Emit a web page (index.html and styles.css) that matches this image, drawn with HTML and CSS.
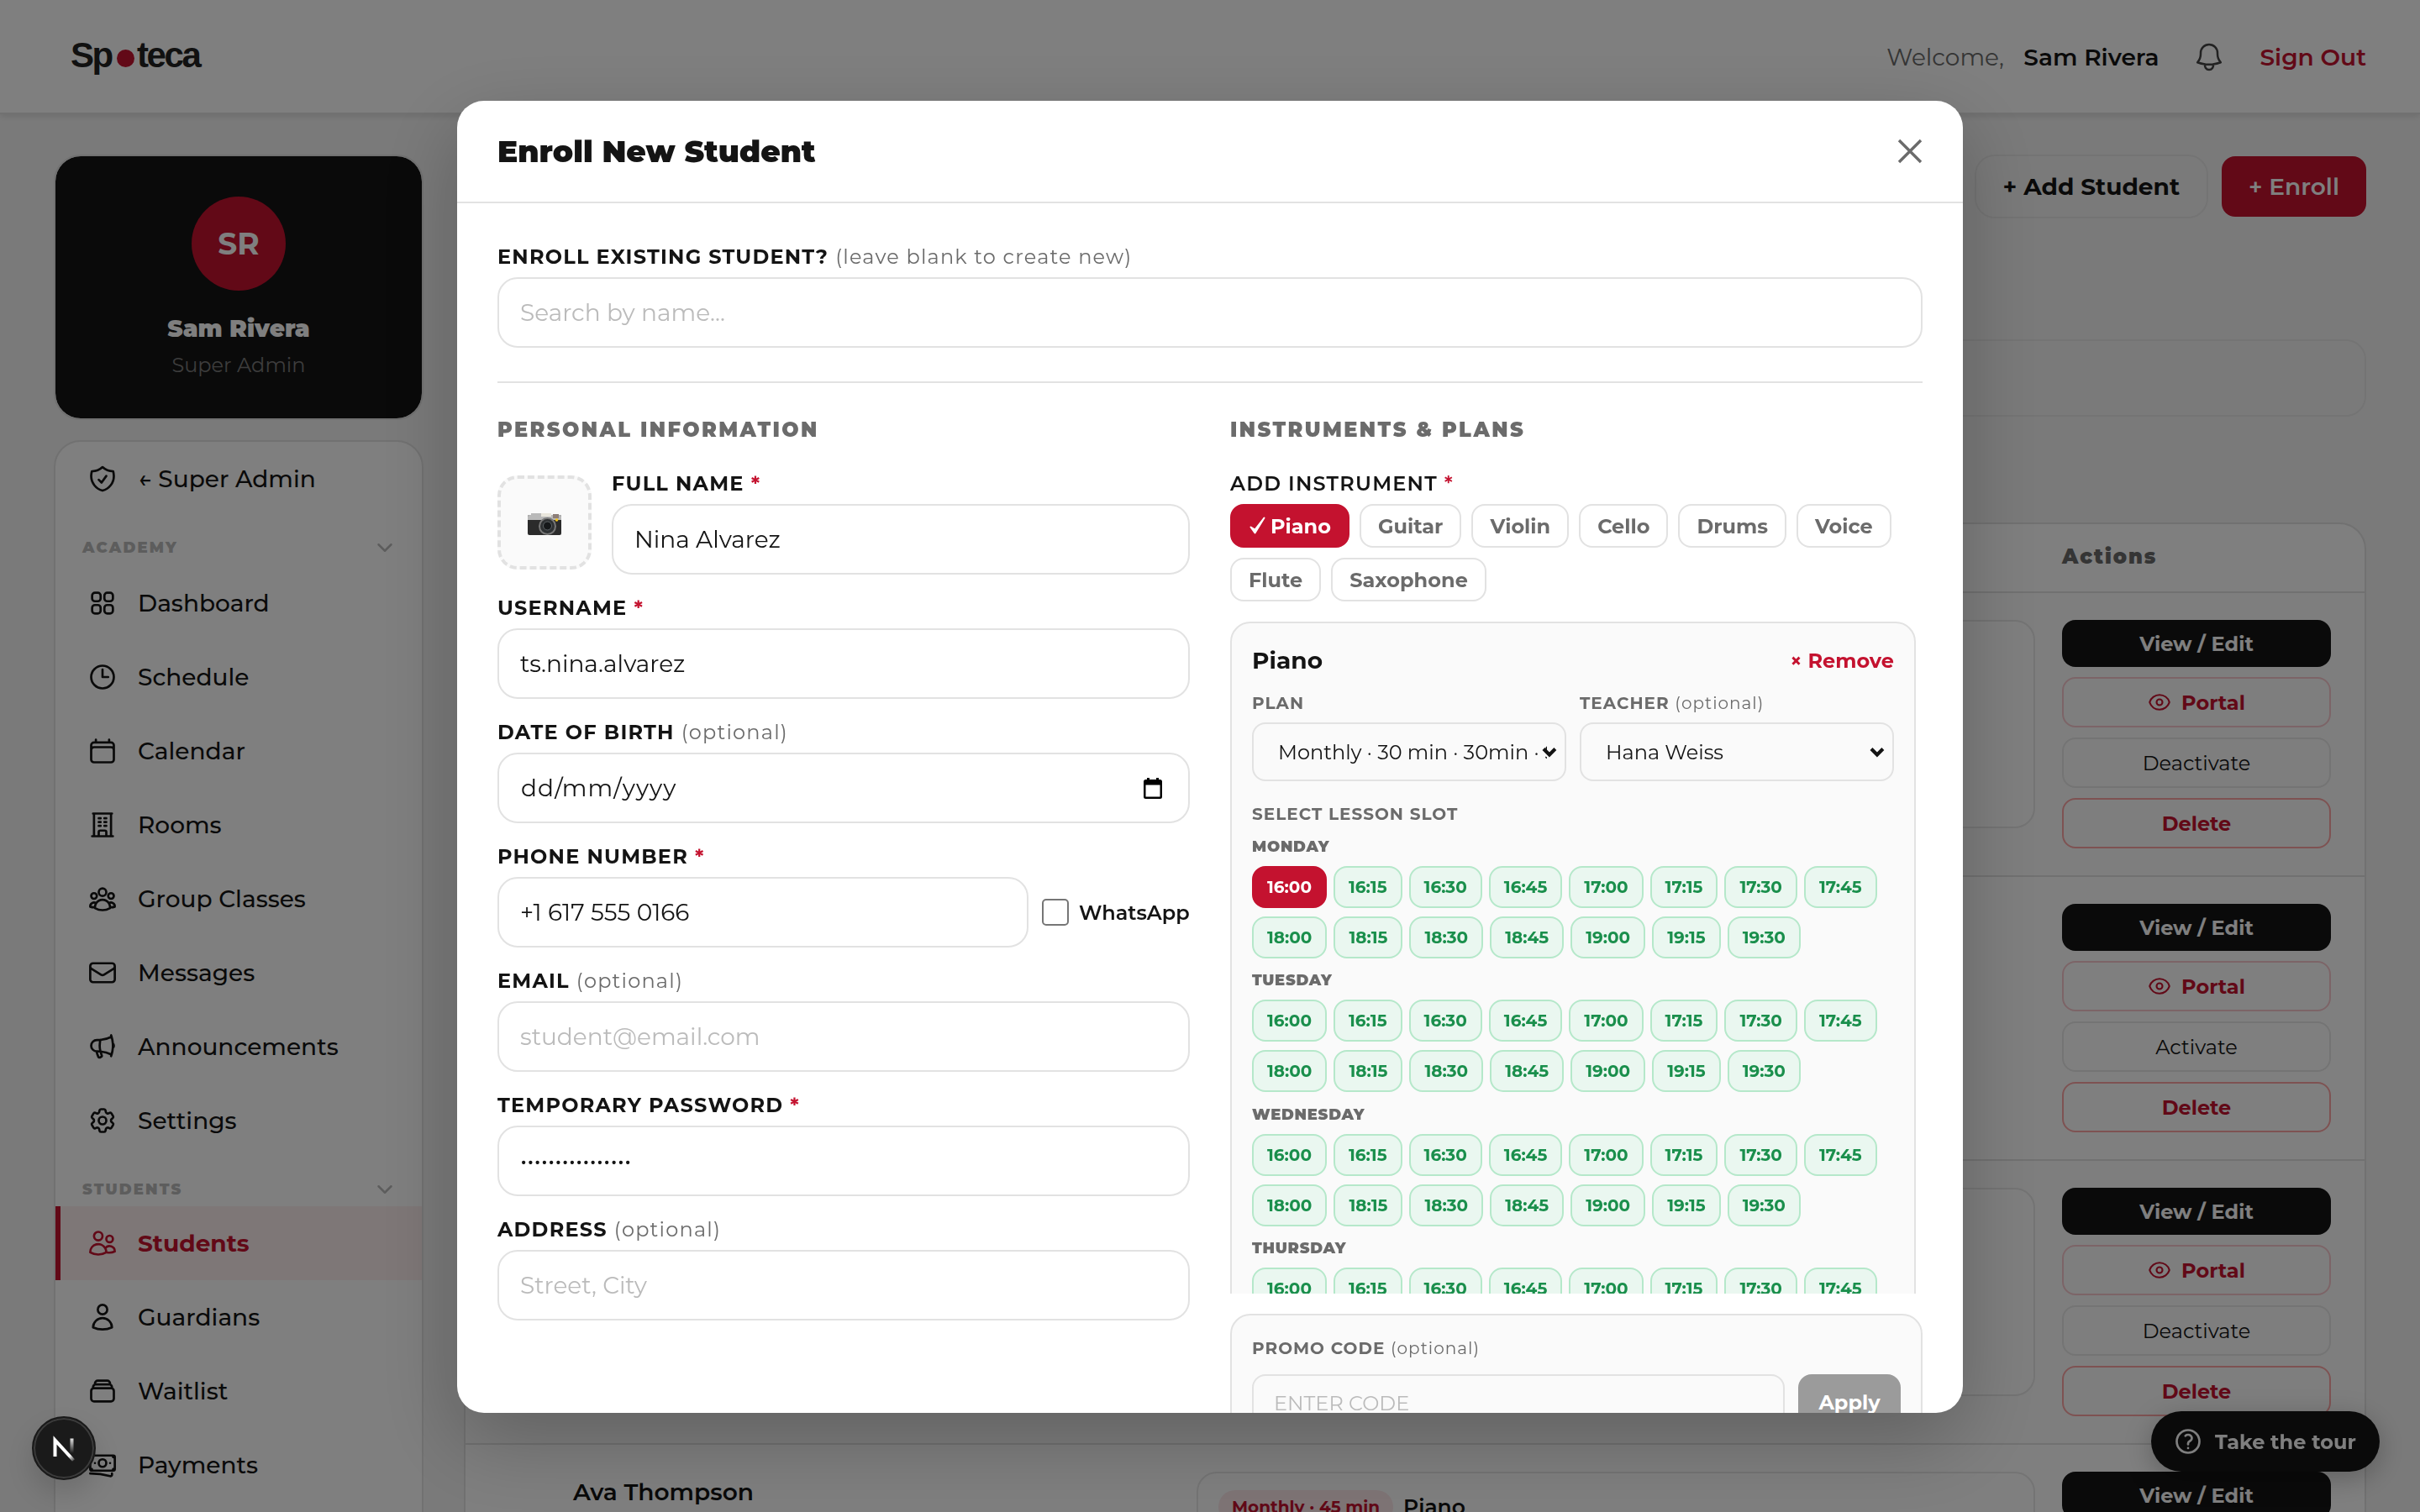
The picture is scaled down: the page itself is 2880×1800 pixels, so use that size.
FILE: index.html
```html
<!DOCTYPE html>
<html lang="en">

<head>
    <meta charset="utf-8">
    <meta name="viewport" content="width=device-width, initial-scale=1.0">
    <title>Spoteca - Students</title>
    <link rel="stylesheet" href="styles.css">
</head>

<body>
    <header class="topbar">
        <div class="logo">Sp<span class="logo-dot"></span>teca</div>
        <div class="topbar-right">
            <div class="welcome">Welcome, <b>Sam Rivera</b></div>
            <svg class="icon bell" viewBox="0 0 24 24"><path d="M14.857 17.082a23.848 23.848 0 0 0 5.454-1.31A8.967 8.967 0 0 1 18 9.75V9A6 6 0 0 0 6 9v.75a8.967 8.967 0 0 1-2.312 6.022c1.733.64 3.56 1.085 5.455 1.31m5.714 0a24.255 24.255 0 0 1-5.714 0m5.714 0a3 3 0 1 1-5.714 0"/></svg>
            <a class="sign-out">Sign Out</a>
        </div>
    </header>

    <div class="page">
        <aside class="sidebar">
            <div class="profile">
                <div class="avatar">SR</div>
                <div class="profile-name">Sam Rivera</div>
                <div class="profile-role">Super Admin</div>
            </div>
            <nav class="nav">
                <a class="nav-item"><svg class="icon" viewBox="0 0 24 24"><path d="M9 12.75 11.25 15 15 9.75m-3-7.036A11.959 11.959 0 0 1 3.598 6 11.99 11.99 0 0 0 3 9.749c0 5.592 3.824 10.29 9 11.623 5.176-1.332 9-6.03 9-11.622 0-1.31-.21-2.571-.598-3.751h-.152c-3.196 0-6.1-1.248-8.25-3.285Z"/></svg>← Super Admin</a>
                <div class="nav-section first">ACADEMY<svg class="icon" viewBox="0 0 24 24"><path d="m19.5 8.25-7.5 7.5-7.5-7.5"/></svg></div>
                <a class="nav-item"><svg class="icon" viewBox="0 0 24 24"><path d="M3.75 6A2.25 2.25 0 0 1 6 3.75h2.25A2.25 2.25 0 0 1 10.5 6v2.25a2.25 2.25 0 0 1-2.25 2.25H6a2.25 2.25 0 0 1-2.25-2.25V6ZM3.75 15.75A2.25 2.25 0 0 1 6 13.5h2.25a2.25 2.25 0 0 1 2.25 2.25V18a2.25 2.25 0 0 1-2.25 2.25H6A2.25 2.25 0 0 1 3.75 18v-2.25ZM13.5 6a2.25 2.25 0 0 1 2.25-2.25H18A2.25 2.25 0 0 1 20.25 6v2.25A2.25 2.25 0 0 1 18 10.5h-2.25a2.25 2.25 0 0 1-2.25-2.25V6ZM13.5 15.75a2.25 2.25 0 0 1 2.25-2.25H18a2.25 2.25 0 0 1 2.25 2.25V18A2.25 2.25 0 0 1 18 20.25h-2.25A2.25 2.25 0 0 1 13.5 18v-2.25Z"/></svg>Dashboard</a>
                <a class="nav-item"><svg class="icon" viewBox="0 0 24 24"><path d="M12 6v6h4.5m4.5 0a9 9 0 1 1-18 0 9 9 0 0 1 18 0Z"/></svg>Schedule</a>
                <a class="nav-item"><svg class="icon" viewBox="0 0 24 24"><path d="M6.75 3v2.25M17.25 3v2.25M3 18.75V7.5a2.25 2.25 0 0 1 2.25-2.25h13.5A2.25 2.25 0 0 1 21 7.5v11.25m-18 0A2.25 2.25 0 0 0 5.25 21h13.5A2.25 2.25 0 0 0 21 18.75m-18 0v-7.5A2.25 2.25 0 0 1 5.25 9h13.5A2.25 2.25 0 0 1 21 11.25v7.5"/></svg>Calendar</a>
                <a class="nav-item"><svg class="icon" viewBox="0 0 24 24"><path d="M3.75 21h16.5M4.5 3h15M5.25 3v18m13.5-18v18M9 6.75h1.5m-1.5 3h1.5m-1.5 3h1.5m3-6H15m-1.5 3H15m-1.5 3H15M9 21v-3.375c0-.621.504-1.125 1.125-1.125h3.75c.621 0 1.125.504 1.125 1.125V21"/></svg>Rooms</a>
                <a class="nav-item"><svg class="icon" viewBox="0 0 24 24"><path d="M18 18.72a9.094 9.094 0 0 0 3.741-.479 3 3 0 0 0-4.682-2.72m.94 3.198.001.031c0 .225-.012.447-.037.666A11.944 11.944 0 0 1 12 21c-2.17 0-4.207-.576-5.963-1.584A6.062 6.062 0 0 1 6 18.719m12 0a5.971 5.971 0 0 0-.941-3.197m0 0A5.995 5.995 0 0 0 12 12.75a5.995 5.995 0 0 0-5.058 2.772m0 0a3 3 0 0 0-4.681 2.72 8.986 8.986 0 0 0 3.74.477m.94-3.197a5.971 5.971 0 0 0-.94 3.197M15 6.75a3 3 0 1 1-6 0 3 3 0 0 1 6 0Zm6 3a2.25 2.25 0 1 1-4.5 0 2.25 2.25 0 0 1 4.5 0Zm-13.5 0a2.25 2.25 0 1 1-4.5 0 2.25 2.25 0 0 1 4.5 0Z"/></svg>Group Classes</a>
                <a class="nav-item"><svg class="icon" viewBox="0 0 24 24"><path d="M21.75 6.75v10.5a2.25 2.25 0 0 1-2.25 2.25h-15a2.25 2.25 0 0 1-2.25-2.25V6.75m19.5 0A2.25 2.25 0 0 0 19.5 4.5h-15a2.25 2.25 0 0 0-2.25 2.25m19.5 0v.243a2.25 2.25 0 0 1-1.07 1.916l-7.5 4.615a2.25 2.25 0 0 1-2.36 0L3.32 8.91a2.25 2.25 0 0 1-1.07-1.916V6.75"/></svg>Messages</a>
                <a class="nav-item"><svg class="icon" viewBox="0 0 24 24"><path d="M10.34 15.84c-.688-.06-1.386-.09-2.09-.09H7.5a4.5 4.5 0 1 1 0-9h.75c.704 0 1.402-.03 2.09-.09m0 9.18c.253.962.584 1.892.985 2.783.247.55.06 1.21-.463 1.511l-.657.38c-.551.318-1.26.117-1.527-.461a20.845 20.845 0 0 1-1.44-4.282m3.102.069a18.03 18.03 0 0 1-.59-4.59c0-1.586.205-3.124.59-4.59m0 9.18a23.848 23.848 0 0 1 8.835 2.535M10.34 6.66a23.847 23.847 0 0 0 8.835-2.535m0 0A23.74 23.74 0 0 0 18.795 3m.38 1.125a23.91 23.91 0 0 1 1.014 5.395m-1.014 8.855c-.118.38-.245.754-.38 1.125m.38-1.125a23.91 23.91 0 0 0 1.014-5.395m0-3.46c.495.413.811 1.035.811 1.73 0 .695-.316 1.317-.811 1.73m0-3.46a24.347 24.347 0 0 1 0 3.46"/></svg>Announcements</a>
                <a class="nav-item"><svg class="icon" viewBox="0 0 24 24"><path d="M9.594 3.94c.09-.542.56-.94 1.11-.94h2.593c.55 0 1.02.398 1.11.94l.213 1.281c.063.374.313.686.645.87.074.04.147.083.22.127.325.196.72.257 1.075.124l1.217-.456a1.125 1.125 0 0 1 1.37.49l1.296 2.247a1.125 1.125 0 0 1-.26 1.431l-1.003.827c-.293.241-.438.613-.43.992a7.723 7.723 0 0 1 0 .255c-.008.378.137.75.43.991l1.004.827c.424.35.534.955.26 1.43l-1.298 2.247a1.125 1.125 0 0 1-1.369.491l-1.217-.456c-.355-.133-.75-.072-1.076.124a6.47 6.47 0 0 1-.22.128c-.331.183-.581.495-.644.869l-.213 1.281c-.09.543-.56.94-1.11.94h-2.594c-.55 0-1.019-.398-1.11-.94l-.213-1.281c-.062-.374-.312-.686-.644-.87a6.52 6.52 0 0 1-.22-.127c-.325-.196-.72-.257-1.076-.124l-1.217.456a1.125 1.125 0 0 1-1.369-.49l-1.297-2.247a1.125 1.125 0 0 1 .26-1.431l1.004-.827c.292-.24.437-.613.43-.991a6.932 6.932 0 0 1 0-.255c.007-.38-.138-.751-.43-.992l-1.004-.827a1.125 1.125 0 0 1-.26-1.43l1.297-2.247a1.125 1.125 0 0 1 1.37-.491l1.216.456c.356.133.751.072 1.076-.124.072-.044.146-.086.22-.128.332-.183.582-.495.644-.869l.214-1.28Z"/><path d="M15 12a3 3 0 1 1-6 0 3 3 0 0 1 6 0Z"/></svg>Settings</a>
                <div class="nav-section">STUDENTS<svg class="icon" viewBox="0 0 24 24"><path d="m19.5 8.25-7.5 7.5-7.5-7.5"/></svg></div>
                <a class="nav-item active"><svg class="icon" viewBox="0 0 24 24"><path d="M15 19.128a9.38 9.38 0 0 0 2.625.372 9.337 9.337 0 0 0 4.121-.952 4.125 4.125 0 0 0-7.533-2.493M15 19.128v-.003c0-1.113-.285-2.16-.786-3.07M15 19.128v.106A12.318 12.318 0 0 1 8.624 21c-2.331 0-4.512-.645-6.374-1.766l-.001-.109a6.375 6.375 0 0 1 11.964-3.07M12 6.375a3.375 3.375 0 1 1-6.75 0 3.375 3.375 0 0 1 6.75 0Zm8.25 2.25a2.625 2.625 0 1 1-5.25 0 2.625 2.625 0 0 1 5.25 0Z"/></svg>Students</a>
                <a class="nav-item"><svg class="icon" viewBox="0 0 24 24"><path d="M15.75 6a3.75 3.75 0 1 1-7.5 0 3.75 3.75 0 0 1 7.5 0ZM4.501 20.118a7.5 7.5 0 0 1 14.998 0A17.933 17.933 0 0 1 12 21.75c-2.676 0-5.216-.584-7.499-1.632Z"/></svg>Guardians</a>
                <a class="nav-item"><svg class="icon" viewBox="0 0 24 24"><path d="M6 6.878V6a2.25 2.25 0 0 1 2.25-2.25h7.5A2.25 2.25 0 0 1 18 6v.878m-12 0c.235-.083.487-.128.75-.128h10.5c.263 0 .515.045.75.128m-12 0A2.25 2.25 0 0 0 4.5 9v.878m13.5-3A2.25 2.25 0 0 1 19.5 9v.878m0 0a2.246 2.246 0 0 0-.75-.128H5.25c-.263 0-.515.045-.75.128m15 0A2.25 2.25 0 0 1 21 12v6a2.25 2.25 0 0 1-2.25 2.25H5.25A2.25 2.25 0 0 1 3 18v-6c0-.98.626-1.813 1.5-2.122"/></svg>Waitlist</a>
                <a class="nav-item"><svg class="icon" viewBox="0 0 24 24"><path d="M2.25 18.75a60.07 60.07 0 0 1 15.797 2.101c.727.198 1.453-.342 1.453-1.096V18.75M3.75 4.5v.75A.75.75 0 0 1 3 6h-.75m0 0v-.375c0-.621.504-1.125 1.125-1.125H20.25M2.25 6v9m18-10.5v.75c0 .414.336.75.75.75h.75m-1.5-1.5h.375c.621 0 1.125.504 1.125 1.125v9.75c0 .621-.504 1.125-1.125 1.125h-.375m1.5-1.5H21a.75.75 0 0 0-.75.75v.75m0 0H3.75m0 0h-.375a1.125 1.125 0 0 1-1.125-1.125V15m1.5 1.5v-.75A.75.75 0 0 0 3 15h-.75M15 10.5a3 3 0 1 1-6 0 3 3 0 0 1 6 0Zm3 0h.008v.008H18V10.5Zm-12 0h.008v.008H6V10.5Z"/></svg>Payments</a>
            </nav>
        </aside>

        <main class="content">
            <div class="page-actions">
                <a class="btn-outline">+ Add Student</a>
                <a class="btn-red">+ Enroll</a>
            </div>
            <div class="search-bar"></div>
            <div class="table" id="students">
                <div class="table-head">Actions</div>
            </div>
        </main>
    </div>

    <a class="tour"><svg class="icon" viewBox="0 0 24 24"><path d="M9.879 7.519c1.171-1.025 3.071-1.025 4.242 0 1.172 1.025 1.172 2.687 0 3.712-.203.179-.43.326-.67.442-.745.361-1.45.999-1.45 1.827v.75M21 12a9 9 0 1 1-18 0 9 9 0 0 1 18 0Zm-9 5.25h.008v.008H12v-.008Z"/></svg>Take the tour</a>

    <div class="overlay">
        <div class="modal">
            <div class="modal-head">
                <h2>Enroll New Student</h2>
                <svg class="close" viewBox="0 0 30 30"><path d="M2 2l26 26M28 2L2 28"/></svg>
            </div>
            <div class="modal-body">
                <div class="existing">
                    <label class="label">ENROLL EXISTING STUDENT? <span>(leave blank to create new)</span></label>
                    <input class="input" placeholder="Search by name...">
                </div>
                <div class="columns">
                    <div class="column">
                        <h3>PERSONAL INFORMATION</h3>
                        <div class="name-row">
                            <div class="photo">
                                <svg viewBox="0 0 42 28">
                                    <rect x="1" y="3" width="40" height="24" rx="2" fill="#2b2b2b"/>
                                    <path d="M1 9V5q0-2 2-2h2V1h12v2h22q2 0 2 2v4z" fill="#b9b9b9"/>
                                    <rect x="17" y="1" width="12" height="4" fill="#e9e6dc"/>
                                    <rect x="31" y="2" width="7" height="5" fill="#8d7f78"/>
                                    <circle cx="24.500" cy="16.500" r="10.500" fill="#777"/>
                                    <circle cx="24.500" cy="16.500" r="8.500" fill="#2e3133"/>
                                    <circle cx="24.500" cy="16" r="5" fill="#15181a" stroke="#5b6164"/>
                                    <circle cx="35.500" cy="9" r="1.800" fill="#f5c518"/>
                                </svg>
                            </div>
                            <div class="field">
                                <label class="label">FULL NAME <i>*</i></label>
                                <input class="input" value="Nina Alvarez">
                            </div>
                        </div>
                        <div class="field">
                            <label class="label">USERNAME <i>*</i></label>
                            <input class="input" value="ts.nina.alvarez">
                        </div>
                        <div class="field">
                            <label class="label">DATE OF BIRTH <span>(optional)</span></label>
                            <div class="input date">dd/mm/yyyy
                                <svg viewBox="0 0 22 25"><path d="M4 0h3v2h8V0h3v2h1.500q2.500 0 2.500 2.500v18q0 2.500-2.500 2.500h-17Q0 25 0 22.500v-18Q0 2 2.500 2H4zM2.500 8.500v14h17v-14z"/></svg>
                            </div>
                        </div>
                        <div class="field">
                            <label class="label">PHONE NUMBER <i>*</i></label>
                            <div class="phone-row">
                                <input class="input" value="+1 617 555 0166">
                                <span class="checkbox"></span>
                                <span class="whatsapp">WhatsApp</span>
                            </div>
                        </div>
                        <div class="field">
                            <label class="label">EMAIL <span>(optional)</span></label>
                            <input class="input" placeholder="student@email.com">
                        </div>
                        <div class="field">
                            <label class="label">TEMPORARY PASSWORD <i>*</i></label>
                            <input class="input" type="password" value="temporary-pass-1">
                        </div>
                        <div class="field">
                            <label class="label">ADDRESS <span>(optional)</span></label>
                            <input class="input" placeholder="Street, City">
                        </div>
                    </div>

                    <div class="column">
                        <h3>INSTRUMENTS &amp; PLANS</h3>
                        <label class="label medium">ADD INSTRUMENT <i>*</i></label>
                        <div class="chips">
                            <a class="chip selected"><svg viewBox="0 0 22 24"><path d="M2.500 13.500l5 7L18.500 2.500l-11 14z"/></svg>Piano</a>
                            <a class="chip">Guitar</a>
                            <a class="chip">Violin</a>
                            <a class="chip">Cello</a>
                            <a class="chip">Drums</a>
                            <a class="chip">Voice</a>
                            <a class="chip">Flute</a>
                            <a class="chip">Saxophone</a>
                        </div>
                        <div class="plans">
                            <div class="plan">
                                <div class="plan-head">
                                    <span>Piano</span>
                                    <a class="remove">× Remove</a>
                                </div>
                                <div class="plan-selects">
                                    <div>
                                        <label class="small-label">PLAN</label>
                                        <div class="select"><span>Monthly · 30 min · 30min · $120</span><svg viewBox="0 0 20 14"><path d="M3 3.500l7 7 7-7"/></svg></div>
                                    </div>
                                    <div>
                                        <label class="small-label">TEACHER <span>(optional)</span></label>
                                        <div class="select"><span>Hana Weiss</span><svg viewBox="0 0 20 14"><path d="M3 3.500l7 7 7-7"/></svg></div>
                                    </div>
                                </div>
                                <label class="small-label slot-label">SELECT LESSON SLOT</label>
                                <div id="days"></div>
                            </div>
                        </div>
                        <div class="promo">
                            <label class="small-label">PROMO CODE <span>(optional)</span></label>
                            <div class="promo-row">
                                <input class="promo-input" placeholder="ENTER CODE">
                                <a class="apply">Apply</a>
                            </div>
                        </div>
                    </div>
                </div>
            </div>
        </div>
    </div>

    <div class="dev-badge">
        <svg viewBox="0 0 40 40">
            <defs>
                <linearGradient id="fade-a" x1="20" y1="20" x2="33" y2="36" gradientUnits="userSpaceOnUse"><stop offset=".55" stop-color="#fff"/><stop offset="1" stop-color="#fff" stop-opacity="0"/></linearGradient>
                <linearGradient id="fade-b" x1="0" y1="6" x2="0" y2="26" gradientUnits="userSpaceOnUse"><stop stop-color="#fff"/><stop offset="1" stop-color="#fff" stop-opacity="0"/></linearGradient>
            </defs>
            <path d="M9.500 30V10.500L31.500 34.500" stroke="url(#fade-a)"/>
            <path d="M29.500 8.500v20" stroke="url(#fade-b)"/>
        </svg>
    </div>
    <script src="students.js"></script>
</body>

</html>
```

FILE: styles.css
```css
* {
    box-sizing: border-box;
}

html,
body {
    height: 100%;
    overflow: hidden;
}

body {
    margin: 0;
    background: #f5f5f5;
    color: #141414;
    font-family: Montserrat, Inter, sans-serif;
    font-size: 28px;
}

h2,
h3 {
    margin: 0;
}

.icon {
    width: 36px;
    height: 36px;
    flex: none;
    fill: none;
    stroke: currentColor;
    stroke-width: 1.8;
    stroke-linecap: round;
    stroke-linejoin: round;
}

/* top bar */

.topbar {
    position: relative;
    display: flex;
    align-items: center;
    justify-content: space-between;
    height: 136px;
    padding: 12px 64px 0 84px;
    background: #fff;
    border-bottom: 2px solid #e2e2e2;
    box-shadow: 0 2px 8px rgba(0, 0, 0, 0.12);
}

.logo {
    display: flex;
    align-items: baseline;
    margin-top: -14px;
    font: bold 42px "Liberation Sans", sans-serif;
    letter-spacing: -2.4px;
    color: #222;
}

.logo-dot {
    width: 21px;
    height: 21px;
    margin: 0 3px 0 6px;
    border-radius: 50%;
    background: #c4122f;
}

.topbar-right {
    display: flex;
    align-items: center;
    gap: 40px;
    margin-top: -10px;
}

.welcome {
    color: #6b6b6b;
}

.welcome b {
    margin-left: 16px;
    font-weight: 600;
    color: #141414;
}

.bell {
    width: 40px;
    height: 40px;
    stroke-width: 1.5;
    color: #444;
}

.sign-out {
    font-weight: 600;
    color: #c4122f;
}

/* layout */

.page {
    display: flex;
    gap: 48px;
    padding: 48px 64px 0;
}

.sidebar {
    flex: none;
    width: 440px;
}

.profile {
    display: flex;
    flex-direction: column;
    align-items: center;
    height: 316px;
    padding-top: 48px;
    border: 2px solid #e2e2e2;
    border-radius: 32px;
    background: #141414 padding-box;
    color: #fff;
}

.avatar {
    display: flex;
    align-items: center;
    justify-content: center;
    width: 112px;
    height: 112px;
    border-radius: 50%;
    background: #c4122f;
    font-size: 36px;
    font-weight: 700;
}

.profile-name {
    margin-top: 28px;
    font-weight: 900;
    line-height: 34px;
}

.profile-role {
    margin-top: 10px;
    font-size: 24px;
    line-height: 34px;
    color: #7a7a7a;
}

.nav {
    height: 1500px;
    margin-top: 24px;
    border: 2px solid #e2e2e2;
    border-radius: 32px;
    background: #fff;
}

.nav-item {
    display: flex;
    align-items: center;
    gap: 24px;
    height: 88px;
    padding-left: 32px;
    border-left: 6px solid transparent;
    font-weight: 500;
}

.nav-item.active {
    border-left-color: #c4122f;
    background: #fdeeef;
    color: #c4122f;
    font-weight: 700;
}

.nav-section {
    display: flex;
    align-items: center;
    justify-content: space-between;
    height: 58px;
    padding: 17px 32px 0;
    font-size: 18px;
    font-weight: 900;
    letter-spacing: 2.16px;
    color: #bbb;
}

.nav-section.first {
    height: 60px;
    padding-top: 15px;
}

.nav-section .icon {
    width: 24px;
    height: 24px;
    stroke-width: 2.5;
}

.content {
    flex: 1;
}

.page-actions {
    display: flex;
    align-items: center;
    justify-content: flex-end;
    gap: 16px;
    height: 76px;
}

.btn-outline,
.btn-red {
    display: flex;
    align-items: center;
    height: 76px;
    padding: 0 32px;
    border: 2px solid #e8e8e8;
    border-radius: 24px;
    font-weight: 700;
}

.btn-red {
    height: 72px;
    border: none;
    border-radius: 16px;
    background: #c4122f;
    color: #fff;
    font-weight: 600;
}

.search-bar {
    height: 92px;
    margin-top: 144px;
    border: 2px solid #e8e8e8;
    border-radius: 24px;
}

.table {
    margin-top: 126px;
    border: 2px solid #e2e2e2;
    border-radius: 32px;
    background: #fff;
    overflow: hidden;
}

.table-head {
    height: 82px;
    padding: 24px 0 0 1900px;
    border-bottom: 2px solid #e2e2e2;
    font-size: 24px;
    font-weight: 900;
    letter-spacing: 1.92px;
    color: #6b6b6b;
}

.row {
    display: grid;
    grid-template-columns: 710px 998px 320px;
    gap: 32px;
    height: 338px;
    padding: 32px 40px 32px 128px;
    border-bottom: 2px solid #e2e2e2;
    background: #fcfcfc;
}

.row:nth-child(odd) {
    background: #fff;
}

.row-name {
    padding-top: 7px;
    font-weight: 600;
}

.row-plan {
    display: flex;
    align-items: flex-start;
    gap: 12px;
    height: 248px;
    padding: 20px 24px;
    border: 2px solid #e8e8e8;
    border-radius: 24px;
    background: #fff;
    font-size: 25px;
    font-weight: 600;
    line-height: 40px;
}

.row-tag {
    padding: 0 16px;
    border-radius: 20px;
    background: #fce8eb;
    color: #c4122f;
    font-size: 20px;
    font-weight: 700;
}

.row-actions {
    display: flex;
    flex-direction: column;
    gap: 12px;
}

.action {
    display: flex;
    align-items: center;
    justify-content: center;
    gap: 12px;
    height: 60px;
    border: 2px solid #e8e8e8;
    border-radius: 16px;
    font-size: 24px;
}

.action.view {
    height: 56px;
    border: none;
    background: #141414;
    color: #fff;
    font-weight: 700;
}

.action.portal {
    border-color: #f9c9cf;
    color: #c4122f;
    font-weight: 700;
}

.action.delete {
    border-color: #fca5a5;
    color: #c4122f;
    font-weight: 700;
}

.action .icon {
    width: 28px;
    height: 28px;
}

.tour {
    position: fixed;
    right: 48px;
    bottom: 48px;
    display: flex;
    align-items: center;
    gap: 14px;
    width: 272px;
    height: 72px;
    padding-left: 26px;
    border-radius: 36px;
    background: #141414;
    color: #fff;
    font-size: 24px;
    font-weight: 700;
    box-shadow: 0 8px 32px rgba(0, 0, 0, 0.25);
}

/* modal */

.overlay {
    position: fixed;
    inset: 0;
    padding-top: 120px;
    background: rgba(0, 0, 0, 0.5);
}

.modal {
    width: 1792px;
    height: 1562px;
    margin: 0 auto;
    border-radius: 32px;
    background: #fff;
    overflow: hidden;
    box-shadow: 0 32px 96px rgba(0, 0, 0, 0.24);
}

.modal-head {
    display: flex;
    align-items: center;
    justify-content: space-between;
    height: 122px;
    padding: 0 48px;
    border-bottom: 2px solid #e2e2e2;
}

.modal-head h2 {
    font-size: 36px;
    font-weight: 900;
}

.close {
    width: 30px;
    height: 30px;
    fill: none;
    stroke: #6b6b6b;
    stroke-width: 3.4;
}

.modal-body {
    padding: 48px;
}

.existing {
    padding-bottom: 40px;
    border-bottom: 2px solid #e2e2e2;
}

.label {
    display: block;
    margin-bottom: 8px;
    font-size: 24px;
    font-weight: 700;
    line-height: 32px;
    letter-spacing: 1.2px;
}

.label.medium {
    font-weight: 600;
}

.label span,
.small-label span {
    font-weight: 400;
    color: #6b6b6b;
}

.label i {
    font-style: normal;
    color: #c4122f;
}

.input {
    display: block;
    width: 100%;
    height: 84px;
    padding: 0 26px 0 25px;
    border: 2px solid #e2e2e2;
    border-radius: 24px;
    background: #fff;
    color: #141414;
    font: 400 28px Montserrat, Inter, sans-serif;
}

input::placeholder {
    color: #bbb;
}

.columns {
    display: grid;
    grid-template-columns: 1fr 1fr;
    gap: 48px;
    padding-top: 40px;
}

.column h3 {
    margin-bottom: 32px;
    font-size: 24px;
    font-weight: 900;
    line-height: 32px;
    letter-spacing: 2.4px;
    color: #6b6b6b;
}

.field {
    margin-bottom: 24px;
}

.name-row {
    display: flex;
    align-items: center;
    gap: 24px;
    margin-bottom: 24px;
}

.name-row .field {
    flex: 1;
    margin-bottom: 0;
}

.photo {
    display: flex;
    align-items: center;
    justify-content: center;
    width: 112px;
    height: 112px;
    padding-top: 4px;
    border: 4px dashed #e2e2e2;
    border-radius: 24px;
    background: #fafafa;
}

.photo svg {
    width: 42px;
    height: 28px;
}

.date {
    display: flex;
    align-items: center;
    justify-content: space-between;
    padding: 0 31px 0 26px;
    letter-spacing: 1.1px;
}

.date svg {
    width: 22px;
    height: 25px;
}

.phone-row {
    display: flex;
    align-items: center;
}

.phone-row .input {
    width: 632px;
}

.checkbox {
    width: 32px;
    height: 32px;
    margin: 0 12px 0 16px;
    border: 2px solid #767676;
    border-radius: 5px;
}

.whatsapp {
    font-size: 24px;
    font-weight: 600;
}

.chips {
    display: flex;
    flex-wrap: wrap;
    gap: 12px;
}

.chip {
    display: flex;
    align-items: center;
    height: 52px;
    padding: 0 20px;
    border: 2px solid #e2e2e2;
    border-radius: 16px;
    color: #6b6b6b;
    font-size: 24px;
    font-weight: 700;
}

.chip.selected {
    border-color: #c4122f;
    background: #c4122f;
    color: #fff;
}

.chip svg {
    width: 22px;
    height: 24px;
    margin-right: 4px;
    fill: #fff;
    stroke: #fff;
    stroke-width: 2;
    stroke-linejoin: round;
}

.plans {
    height: 800px;
    margin-top: 24px;
    padding-right: 8px;
    overflow: hidden;
}

.plan {
    height: 1200px;
    padding: 24px;
    border: 2px solid #e2e2e2;
    border-radius: 24px;
    background: #fafafa;
}

.plan-head {
    display: flex;
    align-items: center;
    justify-content: space-between;
    height: 40px;
    font-weight: 700;
}

.remove {
    color: #c4122f;
    font-size: 24px;
}

.plan-selects {
    display: grid;
    grid-template-columns: 374px 374px;
    gap: 16px;
    margin-top: 18px;
}

.small-label {
    display: block;
    margin-bottom: 10px;
    color: #6b6b6b;
    font-size: 20px;
    font-weight: 700;
    line-height: 26px;
    letter-spacing: 1px;
}

.select {
    display: flex;
    align-items: center;
    justify-content: space-between;
    height: 70px;
    padding: 0 8px 0 29px;
    border: 2px solid #e2e2e2;
    border-radius: 16px;
    font-size: 24px;
}

.select span {
    width: 323px;
    overflow: hidden;
    white-space: nowrap;
}

.select svg {
    width: 20px;
    height: 14px;
    margin-left: -7px;
    fill: none;
    stroke: #141414;
    stroke-width: 4.200;
}

.slot-label {
    margin: 26px 0 0;
}

.day {
    padding-top: 14px;
    margin-bottom: 0.33px;
}

.day-name {
    margin-bottom: 11px;
    color: #6b6b6b;
    font-size: 18px;
    font-weight: 900;
    line-height: 24px;
    letter-spacing: 0.72px;
}

.slots {
    display: flex;
    flex-wrap: wrap;
    gap: 10px 8px;
}

.slot {
    height: 50px;
    padding: 0 16px;
    border: 2px solid #b5e8ca;
    border-radius: 16px;
    background: #eaf7f0;
    color: #1a8f4c;
    font-size: 20px;
    font-weight: 700;
    line-height: 46px;
}

.slot.selected {
    border-color: #c4122f;
    background: #c4122f;
    color: #fff;
}

.promo {
    margin-top: 24px;
    padding: 26px 24px;
    border: 2px solid #e2e2e2;
    border-radius: 24px;
    background: #fafafa;
}

.promo .small-label {
    margin-bottom: 18px;
}

.promo-row {
    display: flex;
    gap: 16px;
}

.promo-input {
    width: 634px;
    height: 68px;
    padding: 0 24px;
    border: 2px solid #e2e2e2;
    border-radius: 16px;
    background: #fafafa;
    font: 400 24px Montserrat, Inter, sans-serif;
}

.apply {
    width: 122px;
    height: 68px;
    border-radius: 16px;
    background: #9b9b9b;
    color: #fff;
    font-size: 24px;
    font-weight: 700;
    line-height: 68px;
    text-align: center;
}

.dev-badge {
    position: fixed;
    left: 38px;
    bottom: 38px;
    display: flex;
    align-items: center;
    justify-content: center;
    width: 76px;
    height: 76px;
    border: 2px solid #1a1a1a;
    border-radius: 50%;
    background: #1a1a1a;
    box-shadow: inset 0 0 0 2px #3c3c3c, 0 16px 32px rgba(0, 0, 0, 0.14);
}

.dev-badge svg {
    width: 40px;
    height: 40px;
    fill: none;
    stroke-width: 4;
}
```

FILE: students.js
```js
const EYE = '<svg class="icon" viewBox="0 0 24 24"><path d="M2.036 12.322a1.012 1.012 0 0 1 0-.639C3.423 7.51 7.36 4.5 12 4.5c4.638 0 8.573 3.007 9.963 7.178.07.207.07.431 0 .639C20.577 16.49 16.64 19.5 12 19.5c-4.638 0-8.573-3.007-9.963-7.178Z"/><path d="M15 12a3 3 0 1 1-6 0 3 3 0 0 1 6 0Z"/></svg>';

const rows = [
    { name: "", plan: "", toggle: "Deactivate" },
    { name: "", plan: null, toggle: "Activate" },
    { name: "", plan: "", toggle: "Deactivate" },
    { name: "Ava Thompson", plan: '<span class="row-tag">Monthly · 45 min</span>Piano', toggle: "Deactivate" }
];

document.getElementById("students").innerHTML += rows.map((row) => `
    <div class="row">
        <div class="row-name">${row.name}</div>
        ${row.plan === null ? "<div></div>" : `<div class="row-plan">${row.plan}</div>`}
        <div class="row-actions">
            <a class="action view">View / Edit</a>
            <a class="action portal">${EYE}Portal</a>
            <a class="action">${row.toggle}</a>
            <a class="action delete">Delete</a>
        </div>
    </div>`).join("");

// lesson slots run every 15 minutes from 16:00 to 19:30
const times = [];
for (let m = 16 * 60; m <= 19 * 60 + 30; m += 15) {
    times.push(`${Math.floor(m / 60)}:${String(m % 60).padStart(2, "0")}`);
}

document.getElementById("days").innerHTML = ["MONDAY", "TUESDAY", "WEDNESDAY", "THURSDAY"].map((day, i) => `
    <div class="day">
        <div class="day-name">${day}</div>
        <div class="slots">${times.map((t, j) => `<a class="slot${i + j === 0 ? " selected" : ""}">${t}</a>`).join("")}</div>
    </div>`).join("");
```
